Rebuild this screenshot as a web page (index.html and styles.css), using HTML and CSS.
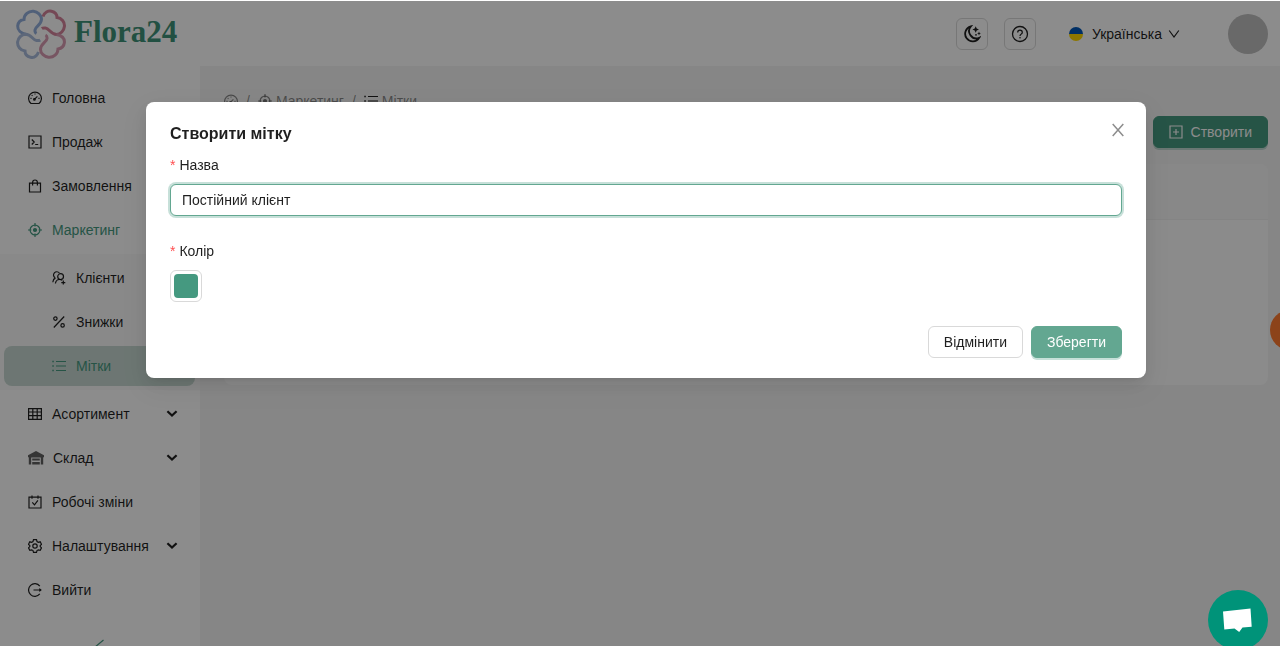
FILE: index.html
```
<!DOCTYPE html>
<html lang="uk">
	<head>
		<meta charset="utf-8">
		<title>Flora24</title>
		<meta name="viewport" content="width=device-width,initial-scale=1">
		<link rel="stylesheet" href="styles.css">
	</head>
	<body>
		<!-- icons shared by the menu and the breadcrumb -->
		<svg class="sprite" aria-hidden="true">
			<symbol id="i-dashboard" viewBox="0 0 14 14"><path d="M3 12.5a6.400 6.400 0 1 1 8 0zM6.600 8.200l2.800-2.900M7 2.400v1.200M2.400 7.400h1.200M10.400 7.400h1.200M3.700 4.100l.8.8"/><circle cx="6.400" cy="8.400" r=".8"/></symbol>
			<symbol id="i-aim" viewBox="0 0 14 14"><circle cx="7" cy="7" r="4.900"/><circle cx="7" cy="7" r="1.500" fill="currentColor"/><path d="M7 0v3.400M7 10.600V14M0 7h3.400M10.600 7H14"/></symbol>
			<symbol id="i-list" viewBox="0 0 14 14"><path d="M4 2.500h10M4 7h10M4 11.500h10"/><path d="M.3 2.500h1.500M.3 7h1.500M.3 11.500h1.500" stroke-width="1.500"/></symbol>
			<symbol id="i-down" viewBox="0 0 12 8"><path d="M1.400 1.200 6 5.600l4.600-4.400" stroke-width="2.200"/></symbol>
		</svg>

		<div class="app">
			<header class="header">
				<a class="logo" href="#">
					<svg class="logo-mark" viewBox="0 0 50 50" aria-hidden="true">
						<path stroke="#94b0dc" d="M10.500 25.500C5 24.500 1.500 21 1.700 17 2 13.500 4.500 11 8 10.500 8 5.500 12.500 1.700 17.500 2.200 21.500 2.700 25.500 6 25.500 10 25.500 16 19.500 17 19 21 18.800 23 19.500 24 20.500 24.500"/>
						<path stroke="#d5849c" d="M27 7.500C28.500 3.500 32 1.500 35.500 2.200 39 3 41 5.500 41 8.500 45.500 9 49 13 48.400 17.500 48 21.500 44.500 25.500 40.500 25.500 34.500 25.500 33.500 19.500 29.500 19 27.500 18.800 26.500 19 25.800 19.500"/>
						<path stroke="#a9bcdc" d="M22.500 43C21 47 18 49 14.500 48.200 11 47.500 9 45 9 42 4.500 41.500 1.200 37.500 1.600 33 2 29 5.500 25.200 9.500 25.200 15.500 25.200 16.500 31 20.500 31.500 22.500 31.700 23.500 31.500 24.200 31"/>
						<path stroke="#d99bb2" d="M40.500 25.500C45.500 26.500 48.700 29.500 48.400 33.500 48 37 45.500 39.500 42 40 42 45 37.500 48.800 32.500 48.300 28.500 47.800 24.500 44.500 24.500 40.500 24.500 34.500 30.500 33.500 31 29.500 31.200 27.500 30.500 26.500 29.500 26"/>
					</svg>
					<span>Flora24</span>
				</a>
				<div class="header-tools">
					<button class="icon-btn" type="button" aria-label="Темна тема">
						<svg viewBox="0 0 18 18"><path d="M7.800 1.400a7.600 7.600 0 1 0 8.400 11.400A7.300 7.300 0 0 1 7.800 1.400z" stroke-width="1.800"/><path class="solid" d="m12.700 1.200 1 2.300 2.300 1-2.300 1-1 2.300-1-2.300-2.300-1 2.300-1zM16 6.600l.6 1.300 1.300.6-1.300.6-.6 1.300-.6-1.300-1.300-.6 1.300-.6z"/><circle class="solid" cx="13" cy="9.800" r=".9"/></svg>
					</button>
					<button class="icon-btn" type="button" aria-label="Довідка">
						<svg viewBox="0 0 18 18"><circle cx="9" cy="9" r="7.500" stroke-width="1.300"/><path d="M6.700 7.400c0-3 4.600-3 4.600 0 0 1.800-2.300 1.700-2.300 3.600" stroke-width="1.200"/><circle class="solid" cx="9" cy="12.800" r=".8"/></svg>
					</button>
					<button class="lang" type="button">
						<span class="flag"></span>
						<span>Українська</span>
						<svg viewBox="0 0 12 12" aria-hidden="true"><path d="m1.200 2.500 4.800 6.500 4.800-6.500"/></svg>
					</button>
					<button class="avatar" type="button" aria-label="Профіль"></button>
				</div>
			</header>

			<div class="layout">
				<aside class="sider">
					<nav class="menu">
						<a class="item" href="#"><svg><use href="#i-dashboard"/></svg>Головна</a>
						<a class="item" href="#"><svg viewBox="0 0 14 14"><path d="M1 1h12v12H1zM3.800 4.500 6.200 7 3.800 9.500M7.200 9.500h3"/></svg>Продаж</a>
						<a class="item" href="#"><svg viewBox="0 0 14 14"><path d="M1.500 4.200h11V13h-11zM4.600 6.500V3.400a2.400 2.400 0 0 1 4.800 0v3.100"/></svg>Замовлення</a>
						<a class="item active" href="#"><svg><use href="#i-aim"/></svg>Маркетинг</a>
						<div class="submenu">
							<a class="item" href="#"><svg viewBox="0 0 14 14"><circle cx="8.600" cy="5.600" r="2.900"/><path d="M3.400 12.500c.4-2.500 1.800-4 4-4 1.200 0 2 .3 2.700.9M3 6.800A3.300 3.300 0 1 1 7.400 2M.8 11.200C1 9 2 7.600 3.500 6.900M11.300 9.600v4M9.300 11.600h4"/></svg>Клієнти</a>
							<a class="item" href="#"><svg viewBox="0 0 14 14"><circle cx="3.400" cy="3.600" r="1.700"/><circle cx="10.600" cy="10.400" r="1.700"/><path d="M12.200 1.500 1.800 12.500"/></svg>Знижки</a>
							<a class="item active selected" href="#"><svg><use href="#i-list"/></svg>Мітки</a>
						</div>
						<a class="item" href="#"><svg viewBox="0 0 14 14"><path d="M.6 1.600h12.800v10.800H.6zM.6 5h12.800M.6 8.700h12.800M4.800 1.600v10.800M9.200 1.600v10.800"/></svg>Асортимент<svg class="arrow"><use href="#i-down"/></svg></a>
						<a class="item" href="#"><svg class="warehouse" viewBox="0 0 16 14"><path d="M0 4.300 8 0l8 4.300v1.900h-.8v7.300h-2.400V6.500H3.200v7H.8V6.200H0zM4.200 7.600h7.600v2H4.200zM4.200 11h7.600v2.500H4.200z"/></svg>Склад<svg class="arrow"><use href="#i-down"/></svg></a>
						<a class="item" href="#"><svg viewBox="0 0 14 14"><path d="M1 2.200h12V13H1zM4 .4v3.400M10 .4v3.400M4.300 7.300l2.200 2.500 3.400-4.500"/></svg>Робочі зміни</a>
						<a class="item" href="#"><svg viewBox="0 0 14 14"><path d="M5.500.7h3l.5 1.800 1.300.8 1.900-.5 1.300 2.500L12.200 6.600v1l1.300 1.300-1.300 2.400-1.900-.5-1.300.8-.5 1.700h-3L5 11.600l-1.300-.8-1.900.5L.5 8.900l1.300-1.300v-1L.5 5.300l1.300-2.500 1.900.5L5 2.500z"/><circle cx="7" cy="7" r="2.200"/></svg>Налаштування<svg class="arrow"><use href="#i-down"/></svg></a>
						<a class="item" href="#"><svg viewBox="0 0 14 14"><path d="M11.800 3.100a6.300 6.300 0 1 0 0 7.800M5.500 7h7"/><path class="solid" d="m11.300 5 2.500 2-2.500 2z"/></svg>Вийти</a>
					</nav>
					<button class="collapse" type="button" aria-label="Згорнути меню">
						<svg viewBox="0 0 14 14"><path d="M10.500 1 3.300 7l7.200 6"/></svg>
					</button>
				</aside>

				<main class="content">
					<nav class="breadcrumb" aria-label="Шлях">
						<a href="#" aria-label="Головна"><svg><use href="#i-dashboard"/></svg></a>
						<span>/</span>
						<a href="#"><svg><use href="#i-aim"/></svg>Маркетинг</a>
						<span>/</span>
						<a href="#"><svg class="current"><use href="#i-list"/></svg>Мітки</a>
					</nav>
					<div class="toolbar">
						<button class="btn btn-primary" type="button">
							<svg viewBox="0 0 14 14"><path d="M1 1h12v12H1zM7 4v6M4 7h6"/></svg>Створити
						</button>
					</div>
					<div class="card">
						<div class="card-head"></div>
						<div class="card-body"></div>
					</div>
				</main>
			</div>
			<button class="side-tab" type="button" aria-label="Підказка"></button>
		</div>

		<div class="mask">
			<form class="modal" role="dialog" aria-labelledby="modal-title">
				<h2 id="modal-title">Створити мітку</h2>
				<button class="close" type="button" aria-label="Закрити">
					<svg viewBox="0 0 14 14"><path d="m1.700 1 10.600 12M12.300 1 1.700 13"/></svg>
				</button>
				<div class="field">
					<label for="name">Назва</label>
					<input class="text" id="name" type="text" value="Постійний клієнт">
				</div>
				<div class="field">
					<label for="color">Колір</label>
					<input class="color" id="color" type="color" value="#459980">
				</div>
				<div class="actions">
					<button class="btn" type="button">Відмінити</button>
					<button class="btn btn-primary light" type="submit">Зберегти</button>
				</div>
			</form>
		</div>

		<button class="chat" type="button" aria-label="Чат">
			<svg viewBox="0 0 30 26"><path d="M0 4.500 27.500 1.500 28.700 19.700l-9.200.9-3.300 4.400-4.700-3.500-10.200 1z"/></svg>
		</button>
	</body>
</html>
```
FILE: styles.css
```
* {
	box-sizing: border-box;
}

body {
	margin: 0;
	overflow: hidden;
	background: #f5f5f5;
	color: rgba(0,0,0,.88);
	font-family: "Liberation Sans", Arial, sans-serif;
	font-size: 14px;
	line-height: 22px;
}

a {
	color: inherit;
	text-decoration: none;
}

button, input {
	font: inherit;
	color: inherit;
}

button {
	margin: 0;
	padding: 0;
	border: 0;
	background: none;
	cursor: pointer;
}

svg {
	flex: none;
	width: 14px;
	height: 14px;
	fill: none;
	stroke: currentColor;
	stroke-width: 1.2;
}

.solid {
	fill: currentColor;
	stroke: none;
}

.sprite {
	position: absolute;
	width: 0;
	height: 0;
}

.app {
	display: flex;
	flex-direction: column;
	height: 100vh;
	overflow: hidden;
}

/* header */

.header {
	flex: none;
	display: flex;
	align-items: center;
	justify-content: space-between;
	height: 66px;
	padding: 2px 12px 0 16px;
	background: #fff;
}

.logo {
	display: flex;
	align-items: center;
	gap: 8px;
	color: #3f9379;
	font: bold 31px/40px "Liberation Serif", "Times New Roman", serif;
}

.logo span {
	padding-bottom: 4px;
}

.logo-mark {
	width: 50px;
	height: 50px;
	stroke-width: 3;
}

.header-tools {
	display: flex;
	align-items: center;
	gap: 16px;
}

.icon-btn {
	display: flex;
	align-items: center;
	justify-content: center;
	width: 32px;
	height: 32px;
	border: 1px solid #d9d9d9;
	border-radius: 6px;
}

.icon-btn svg {
	width: 18px;
	height: 18px;
}

.lang {
	display: flex;
	align-items: center;
	gap: 9px;
	padding: 0 32px 0 17px;
}

.lang svg {
	width: 12px;
	height: 12px;
	margin-left: -3px;
}

.flag {
	width: 14px;
	height: 14px;
	border-radius: 50%;
	background: linear-gradient(#0057b8 50%, #ffd700 50%);
}

.avatar {
	width: 40px;
	height: 40px;
	border-radius: 50%;
	background: #bfbfbf;
}

/* side menu */

.layout {
	flex: 1;
	display: flex;
	min-height: 0;
}

.sider {
	flex: none;
	width: 200px;
	overflow: hidden;
	background: #fff;
}

.menu {
	display: flex;
	flex-direction: column;
	gap: 4px;
	padding-top: 12px;
}

.item {
	display: flex;
	align-items: center;
	gap: 10px;
	height: 40px;
	margin: 0 5px 0 4px;
	padding: 0 17px 0 24px;
	border-radius: 8px;
}

.item.active {
	color: #459980;
}

.item.selected {
	background: #c6d8d1;
}

.submenu {
	display: flex;
	flex-direction: column;
	gap: 4px;
	padding: 4px 0;
	background: #fafafa;
}

.submenu .item {
	padding-left: 48px;
}

.arrow {
	width: 12px;
	height: 8px;
	margin-left: auto;
}

.item .warehouse {
	width: 16px;
	fill: currentColor;
	stroke: none;
	opacity: .7;
	margin-right: -1px;
}

.collapse {
	display: flex;
	align-items: center;
	justify-content: center;
	width: 100%;
	height: 48px;
	margin-top: 12px;
	color: #459980;
}

/* page */

.content {
	flex: 1;
	padding: 24px 12px 0 24px;
}

.breadcrumb {
	display: flex;
	gap: 8px;
	color: rgba(0,0,0,.45);
}

.breadcrumb a {
	display: flex;
	align-items: center;
	gap: 4px;
}

.breadcrumb .current {
	color: rgba(0,0,0,.88);
}

.toolbar {
	display: flex;
	justify-content: flex-end;
	margin: 4px 0 16px;
}

.btn {
	display: flex;
	align-items: center;
	gap: 8px;
	height: 32px;
	padding: 0 15px;
	border: 1px solid #d9d9d9;
	border-radius: 6px;
	background: #fff;
}

.btn-primary {
	border-color: #459980;
	background: #459980;
	box-shadow: 0 2px 0 rgba(69,153,128,.3);
	color: #fff;
}

.btn-primary.light {
	border-color: #63a791;
	background: #63a791;
}

.card {
	border-radius: 8px;
	overflow: hidden;
}

.card-head {
	height: 56px;
	border-bottom: 1px solid #f0f0f0;
	background: #f8f8f8;
}

.card-body {
	height: 165px;
	background: #fdfdfd;
}

.side-tab {
	position: absolute;
	top: 310px;
	right: -30px;
	width: 40px;
	height: 40px;
	border-radius: 50%;
	background: #ff7a30;
}

/* modal */

.mask {
	position: fixed;
	inset: 1px 0 0;
	padding: 101px 0 0 12px;
	background: rgba(0,0,0,.45);
}

.modal {
	position: relative;
	width: 1000px;
	max-width: 100%;
	margin: 0 auto;
	padding: 20px 24px;
	border-radius: 8px;
	background: #fff;
	box-shadow: 0 6px 16px rgba(0,0,0,.08), 0 3px 6px -4px rgba(0,0,0,.12), 0 9px 28px 8px rgba(0,0,0,.05);
}

.modal h2 {
	margin: 0 0 8px;
	font-size: 16px;
	line-height: 24px;
}

.close {
	position: absolute;
	top: 17px;
	right: 17px;
	display: flex;
	align-items: center;
	justify-content: center;
	width: 22px;
	height: 22px;
	color: rgba(0,0,0,.45);
}

.close svg {
	stroke-width: 1.5;
}

.field {
	margin-bottom: 24px;
}

.field label {
	display: block;
	padding-bottom: 8px;
}

.field label::before {
	content: "*";
	margin-right: 4px;
	color: #ff4d4f;
}

.text {
	display: block;
	width: 100%;
	height: 32px;
	padding: 4px 11px;
	border: 1px solid #63a791;
	border-radius: 6px;
	outline: 0;
	box-shadow: 0 0 0 2px rgba(69,153,128,.3);
}

.color {
	display: block;
	width: 32px;
	height: 32px;
	padding: 3px;
	border: 1px solid #d9d9d9;
	border-radius: 6px;
	background: #fff;
	appearance: none;
}

.color::-webkit-color-swatch-wrapper {
	padding: 0;
}

.color::-webkit-color-swatch {
	border: 0;
	border-radius: 4px;
}

.actions {
	display: flex;
	justify-content: flex-end;
	gap: 8px;
}

.chat {
	position: fixed;
	right: 12px;
	bottom: -4px;
	display: flex;
	align-items: center;
	justify-content: center;
	width: 60px;
	height: 60px;
	border-radius: 50%;
	background: #009379;
}

.chat svg {
	width: 30px;
	height: 26px;
	fill: #fff;
	stroke: none;
}
```
